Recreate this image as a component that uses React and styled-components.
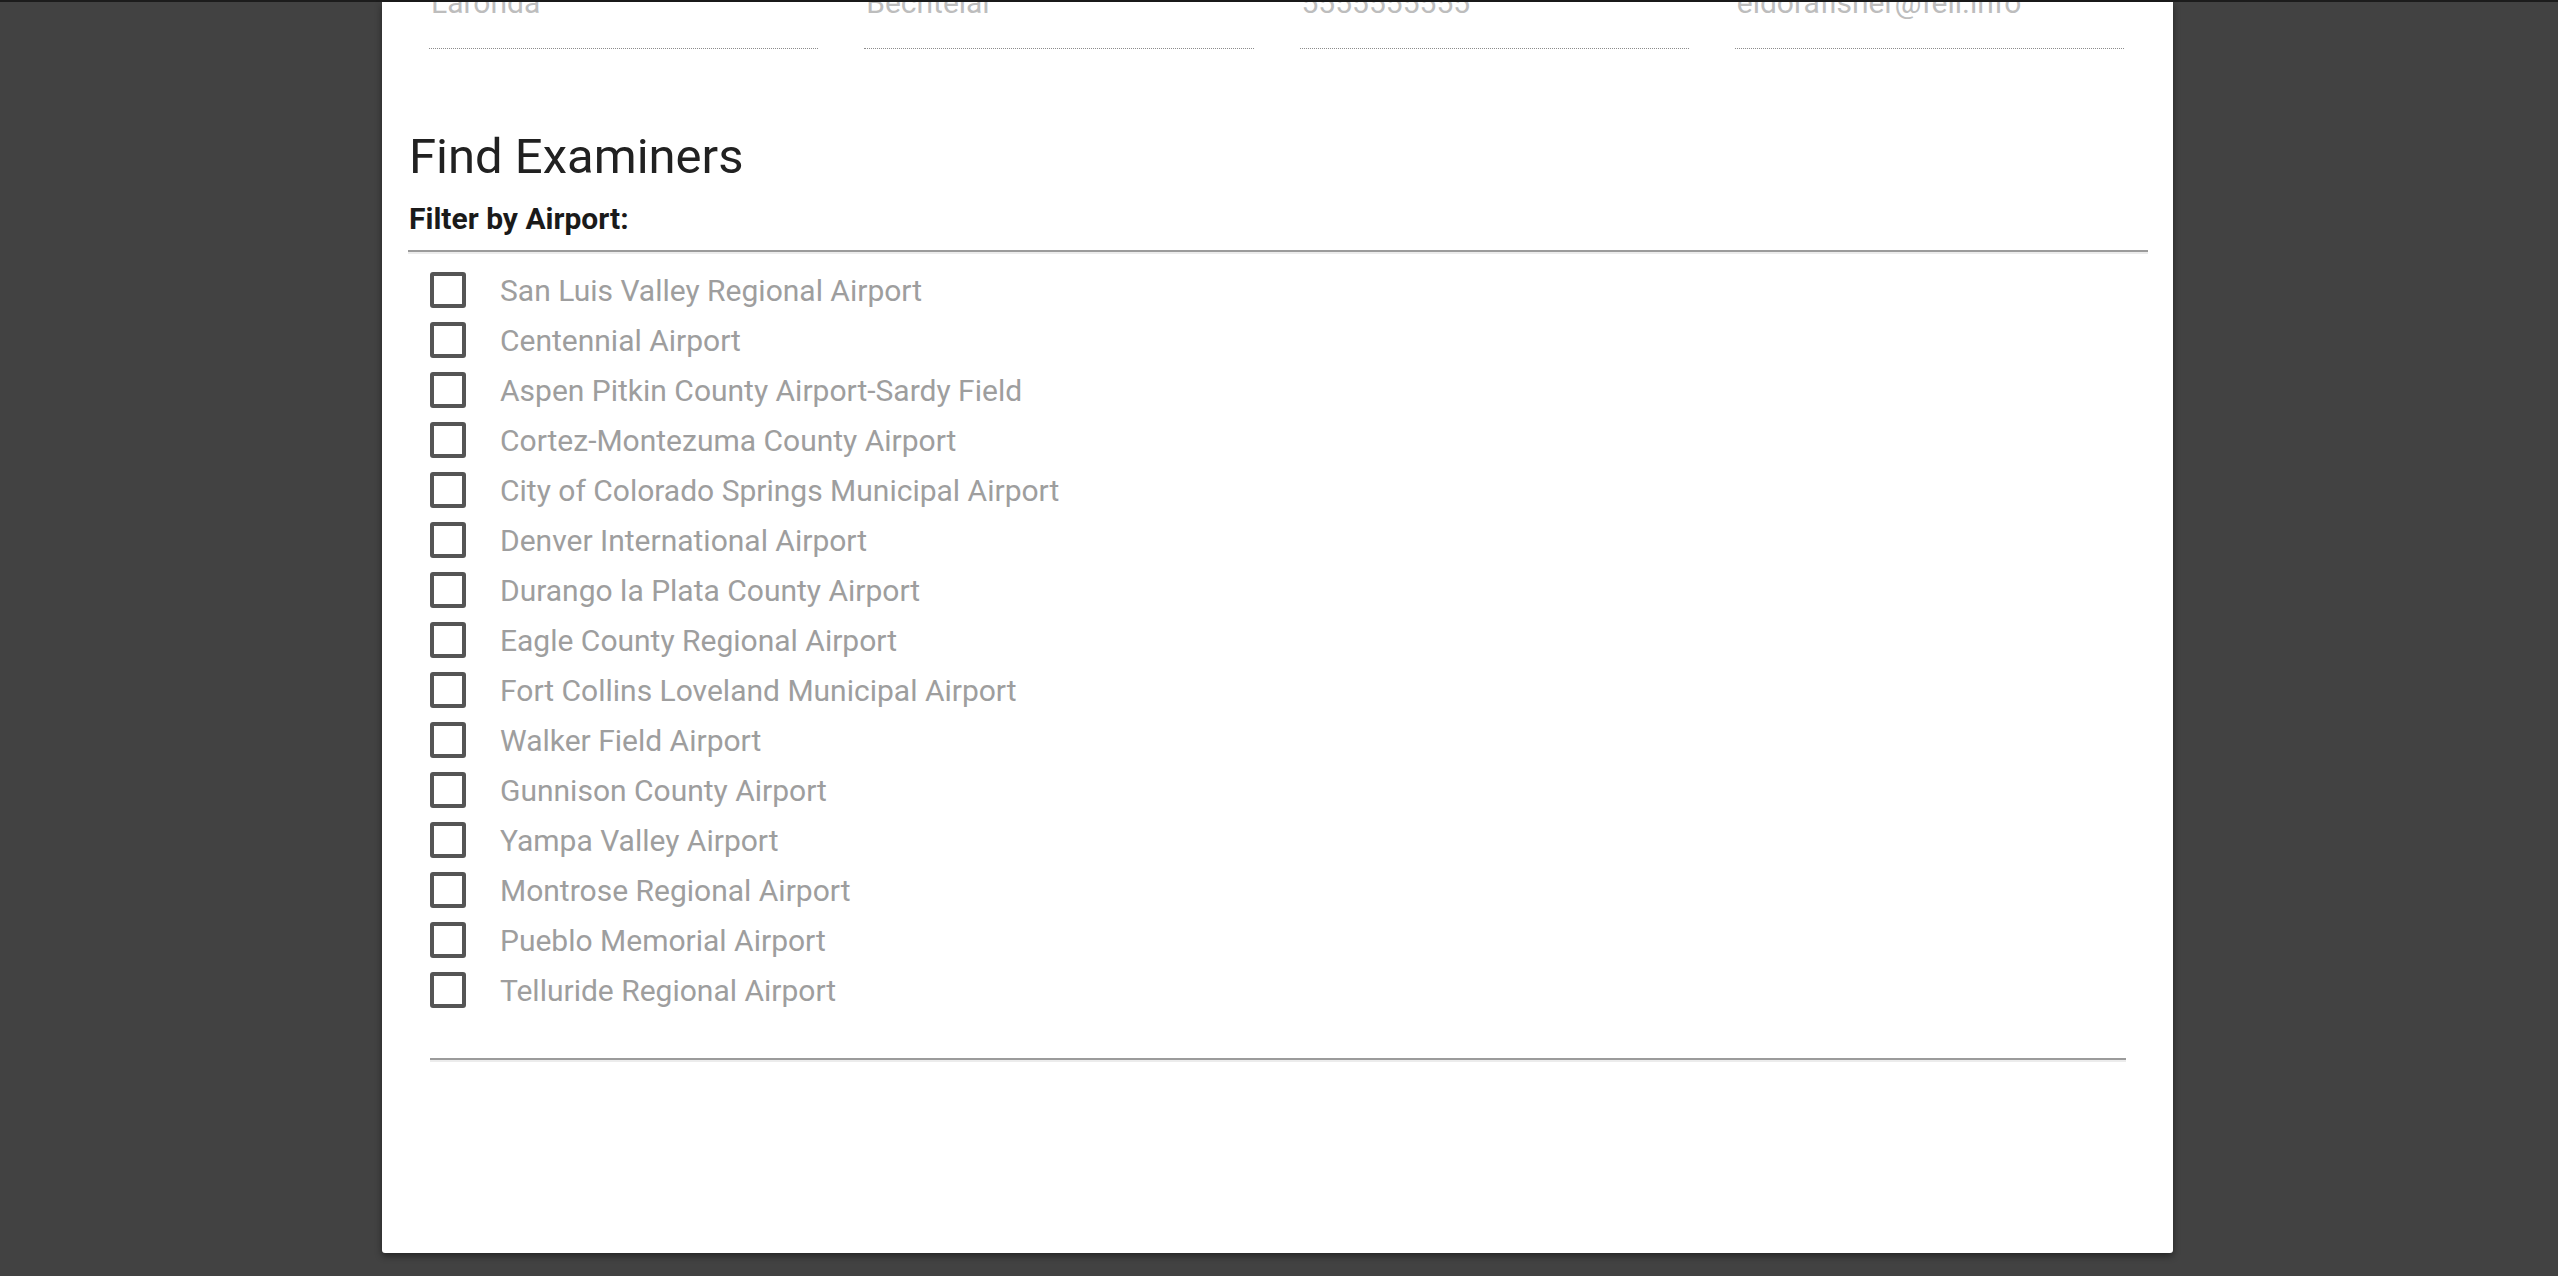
import React from "react";
import styled, { createGlobalStyle } from "styled-components";

const GlobalStyle = createGlobalStyle`
  html, body {
    margin: 0;
    padding: 0;
    background: #424242;
    font-family: Roboto, "Noto Sans", Arial, sans-serif;
    overflow: hidden;
  }
  * { box-sizing: border-box; }
`;

const Page = styled.div`
  min-height: 1276px;
  border-top: 2px solid #1c1c1c;
  padding-left: 382px;
  display: flex;
  align-items: flex-start;
`;

const Panel = styled.main`
  width: 1791px;
  background: #ffffff;
  border-radius: 0 0 3px 3px;
  box-shadow: 0 3px 7px rgba(0, 0, 0, 0.45);
  padding: 0 25px 191px 26px;
  overflow: hidden;
`;

const FieldsRow = styled.div`
  margin-top: -17px;
  padding: 0 24px 0 21px;
  display: grid;
  grid-template-columns: repeat(4, 1fr);
  column-gap: 46px;
`;

const Field = styled.div`
  font-size: 30px;
  line-height: 36px;
  color: #bdbdbd;
  padding: 0 2px 27px;
  border-bottom: 1px dotted #8c8c8c;
  white-space: nowrap;
  overflow: hidden;
`;

const Heading = styled.h1`
  margin: 79px 0 0 1px;
  font-size: 49px;
  line-height: 58px;
  font-weight: 400;
  color: #212121;
`;

const FilterLabel = styled.div`
  margin: 16px 0 0 1px;
  font-size: 30px;
  line-height: 34px;
  font-weight: 700;
  color: #1a1a1a;
`;

const Rule = styled.hr`
  margin: ${(p) => (p.$inset ? "43px 22px 0 22px" : "14px 0 0 0")};
  height: 0;
  border: 0;
  border-top: 2px solid #9b9b9b;
  border-bottom: 2px solid #ececec;
`;

const List = styled.ul`
  list-style: none;
  margin: 0;
  padding: 11px 0 0 22px;
`;

const Row = styled.li`
  height: 50px;
  display: flex;
  align-items: center;
  gap: 34px;
  font-size: 30px;
  color: #9e9e9e;
`;

const Box = styled.span`
  width: 36px;
  height: 36px;
  flex: none;
  border: 4px solid #555555;
  border-radius: 3px;
  background: #fff;
`;

const fields = ["Laronda", "Bechtelar", "5555555555", "eldorafisher@feil.info"];

const airports = [
  "San Luis Valley Regional Airport",
  "Centennial Airport",
  "Aspen Pitkin County Airport-Sardy Field",
  "Cortez-Montezuma County Airport",
  "City of Colorado Springs Municipal Airport",
  "Denver International Airport",
  "Durango la Plata County Airport",
  "Eagle County Regional Airport",
  "Fort Collins Loveland Municipal Airport",
  "Walker Field Airport",
  "Gunnison County Airport",
  "Yampa Valley Airport",
  "Montrose Regional Airport",
  "Pueblo Memorial Airport",
  "Telluride Regional Airport",
];

export default function App() {
  return (
    <>
      <GlobalStyle />
      <Page>
        <Panel>
          <FieldsRow>
            {fields.map((f) => (
              <Field key={f}>{f}</Field>
            ))}
          </FieldsRow>
          <Heading>Find Examiners</Heading>
          <FilterLabel>Filter by Airport:</FilterLabel>
          <Rule />
          <List>
            {airports.map((a) => (
              <Row key={a}>
                <Box />
                {a}
              </Row>
            ))}
          </List>
          <Rule $inset />
        </Panel>
      </Page>
    </>
  );
}
